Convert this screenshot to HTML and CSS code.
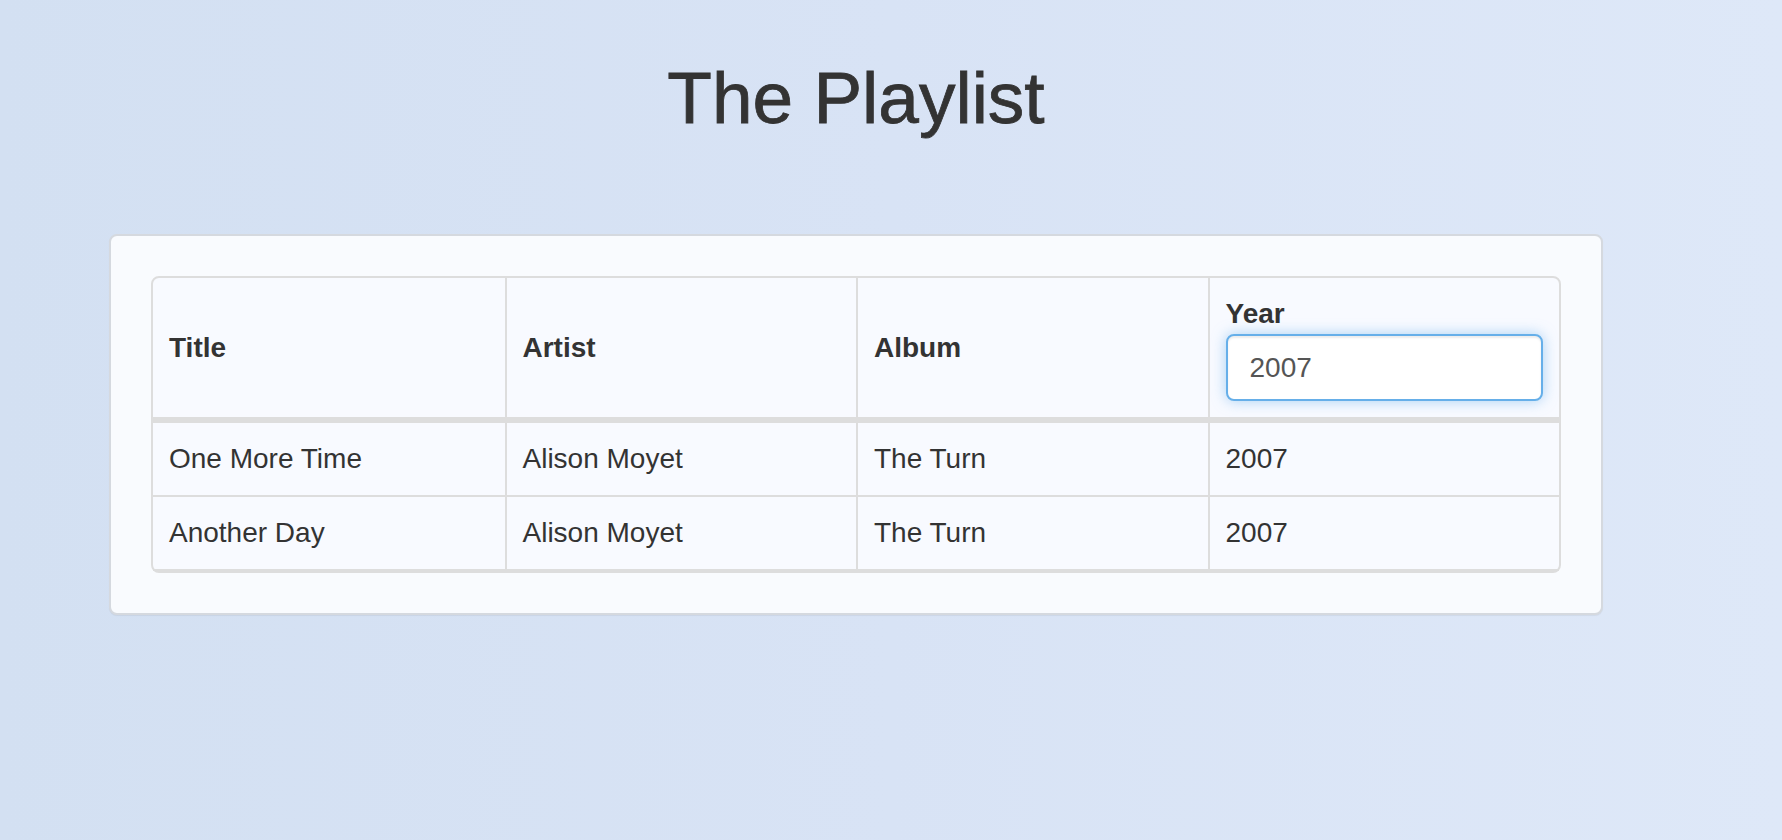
FILE: index.html
```html
<!DOCTYPE html>
<html lang="en">
<head>
<meta charset="utf-8">
<title>The Playlist</title>
<link rel="stylesheet" href="styles.css">
</head>
<body>
<div class="container">
  <h1 class="page-title">The Playlist</h1>
  <div class="well">
    <table class="playlist">
      <thead>
        <tr>
          <th>Title</th>
          <th>Artist</th>
          <th>Album</th>
          <th>
            <div class="year-label">Year</div>
            <input class="year-input" type="text" value="2007">
          </th>
        </tr>
      </thead>
      <tbody>
        <tr>
          <td>One More Time</td>
          <td>Alison Moyet</td>
          <td>The Turn</td>
          <td>2007</td>
        </tr>
        <tr>
          <td>Another Day</td>
          <td>Alison Moyet</td>
          <td>The Turn</td>
          <td>2007</td>
        </tr>
      </tbody>
    </table>
  </div>
</div>
</body>
</html>
```
FILE: styles.css
```css
html, body {
  margin: 0;
  padding: 0;
  height: 100%;
}

body {
  background: linear-gradient(to right, #d3e0f2 0%, #d8e3f5 50%, #dee8f8 100%);
  font-family: "Liberation Sans", Arial, sans-serif;
  color: #333;
  font-size: 28px;
  line-height: 40px;
}

.container {
  margin-left: 109px;
  width: 1494px;
  padding-top: 58px;
}

.page-title {
  margin: 0;
  font-size: 73px;
  line-height: 79px;
  font-weight: normal;
  text-align: center;
  color: #333;
  -webkit-text-stroke: 0.8px #333;
}

.well {
  margin-top: 97px;
  background: #f9fbfe;
  border: 2px solid #d5d9df;
  border-radius: 8px;
  padding: 40px;
  box-shadow: 0 1px 1px rgba(0, 0, 0, 0.06);
}

.playlist {
  width: 100%;
  table-layout: fixed;
  border-collapse: separate;
  border-spacing: 0;
  border: 2px solid #dddddd;
  border-radius: 8px;
  background: #f8faff;
}

.playlist th,
.playlist td {
  padding: 16px;
  text-align: left;
  border-left: 2px solid #dddddd;
}

.playlist th:first-child,
.playlist td:first-child {
  border-left: none;
}

.playlist th {
  font-weight: bold;
  vertical-align: middle;
  border-bottom: 4px solid #dddddd;
}

.playlist td {
  border-top: 2px solid #dddddd;
  vertical-align: top;
}

.playlist tbody tr:last-child td {
  border-bottom: 2px solid #dddddd;
}

.year-label {
  line-height: 40px;
}

.year-input {
  display: block;
  box-sizing: border-box;
  width: 100%;
  height: 67px;
  margin: 0;
  padding: 12px 22px;
  font-family: "Liberation Sans", Arial, sans-serif;
  font-size: 28px;
  color: #555;
  background: #fff;
  border: 2px solid #66afe9;
  border-radius: 8px;
  outline: none;
  box-shadow: inset 0 2px 2px rgba(0, 0, 0, 0.075), 0 0 14px rgba(102, 175, 233, 0.55);
}
```
